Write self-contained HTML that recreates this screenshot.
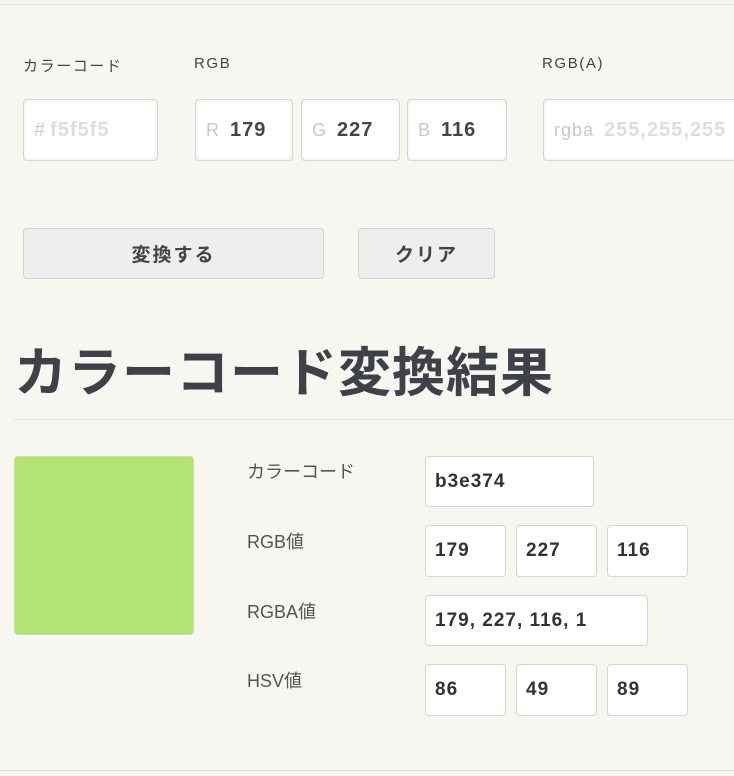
<!DOCTYPE html>
<html><head><meta charset="utf-8"><style>
*{margin:0;padding:0;box-sizing:border-box}
body{width:734px;height:776px;background:#f7f6f0;position:relative;overflow:hidden;font-family:"Liberation Sans","Noto Sans CJK JP",sans-serif;color:#444}
.a{position:absolute}
.line{position:absolute;left:0;right:0;height:1px;background:#e2e2de}
.lab{position:absolute;font-size:15px;letter-spacing:1.6px;color:#444}
.in{position:absolute;background:#fff;border:1px solid #d6d6d2;border-radius:4px;box-shadow:inset 0 0 4px rgba(0,0,0,.08);font-size:20px;font-weight:bold;display:flex;align-items:center;padding-left:10px;letter-spacing:1px}
.ph{color:#c8c8c8;font-weight:normal;margin-right:10px;font-size:18px}
.btn{position:absolute;background:#eeeeee;border:1px solid #d2d2d0;border-radius:4px;font-size:19px;font-weight:bold;display:flex;align-items:center;justify-content:center;letter-spacing:2px;color:#444}
.rl{position:absolute;left:247px;font-size:18px;color:#555}
.rb{position:absolute;background:#fff;border:1px solid #d6d6d2;border-radius:4px;font-size:19px;font-weight:bold;padding-left:9px;display:flex;align-items:center;color:#333;letter-spacing:1px}
</style></head><body>
<div class="line" style="top:4px"></div>
<div class="lab" style="left:23px;top:55px">カラーコード</div>
<div class="lab" style="left:194px;top:55px">RGB</div>
<div class="lab" style="left:542px;top:55px">RGB(A)</div>
<div class="in" style="left:23px;top:99px;width:135px;height:62px;color:#ddd"><span style="color:#ccc;font-weight:normal;margin-right:4px">#</span>f5f5f5</div>
<div class="in" style="left:195px;top:99px;width:98px;height:62px"><span class="ph">R</span>179</div>
<div class="in" style="left:301px;top:99px;width:99px;height:62px"><span class="ph">G</span>227</div>
<div class="in" style="left:407px;top:99px;width:100px;height:62px"><span class="ph">B</span>116</div>
<div class="in" style="left:543px;top:99px;width:200px;height:62px;color:#ddd;white-space:nowrap"><span class="ph">rgba</span>255,255,255</div>
<div class="btn" style="left:23px;top:228px;width:301px;height:51px">変換する</div>
<div class="btn" style="left:358px;top:228px;width:137px;height:51px">クリア</div>
<div class="a" style="left:14px;top:331px;font-size:53px;font-weight:bold;color:#3f4149;letter-spacing:1px;white-space:nowrap">カラーコード変換結果</div>
<div class="line" style="top:419px;left:14px"></div>
<div class="a" style="left:14px;top:456px;width:180px;height:179px;background:#b3e374;border:1px solid #c8dcb8;border-radius:4px"></div>
<div class="rl" style="top:458px">カラーコード</div>
<div class="rl" style="top:528px">RGB値</div>
<div class="rl" style="top:598px">RGBA値</div>
<div class="rl" style="top:667px">HSV値</div>
<div class="rb" style="left:425px;top:456px;width:169px;height:51px">b3e374</div>
<div class="rb" style="left:425px;top:525px;width:81px;height:52px">179</div>
<div class="rb" style="left:516px;top:525px;width:81px;height:52px">227</div>
<div class="rb" style="left:607px;top:525px;width:81px;height:52px">116</div>
<div class="rb" style="left:425px;top:595px;width:223px;height:51px">179, 227, 116, 1</div>
<div class="rb" style="left:425px;top:664px;width:81px;height:52px">86</div>
<div class="rb" style="left:516px;top:664px;width:81px;height:52px">49</div>
<div class="rb" style="left:607px;top:664px;width:81px;height:52px">89</div>
<div class="line" style="top:770px"></div>
</body></html>
